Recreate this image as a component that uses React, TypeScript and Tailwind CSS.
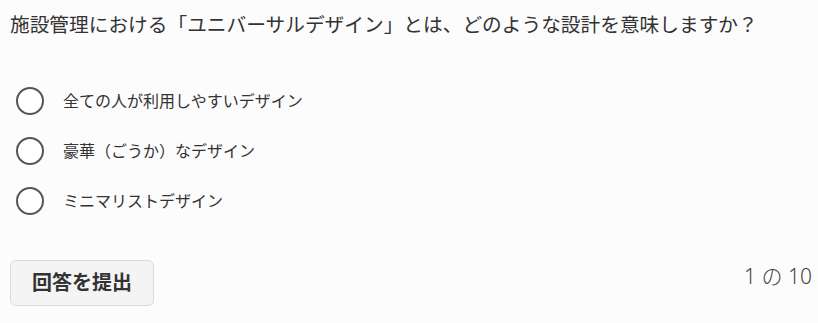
const options = [
  "全ての人が利用しやすいデザイン",
  "豪華（ごうか）なデザイン",
  "ミニマリストデザイン",
];

export default function App() {
  return (
    <div
      className="w-[818px] h-[323px] bg-[#fcfcfc] text-[#333] pl-[10px] pr-[6px] pt-[10px] overflow-hidden"
      style={{ fontFamily: '"Noto Sans", "Noto Sans CJK JP", sans-serif' }}
    >
      {/* QUESTION */}
      <h1 className="text-[19.7px] leading-[30px] font-normal text-[#333]">
        施設管理における「ユニバーサルデザイン」とは、どのような設計を意味しますか？
      </h1>

      {/* OPTIONS */}
      <div className="mt-[36px] flex flex-col">
        {options.map((option) => (
          <label key={option} className="h-[50px] flex items-center gap-[19px] pl-[6px] cursor-pointer">
            <span className="w-[28px] h-[28px] rounded-full border-2 border-[#555] bg-white shrink-0" />
            <span className="text-[16px] text-[#333]">{option}</span>
          </label>
        ))}
      </div>

      {/* FOOTER */}
      <div className="mt-[34px] flex items-start justify-between">
        <button className="h-[46px] px-[21px] rounded-[6px] bg-[#f4f4f4] border border-[#d9d9d9] text-[20px] font-bold text-[#333]">
          回答を提出
        </button>
        <span className="text-[21px] leading-[32px] font-light text-[#444]">1 の 10</span>
      </div>
    </div>
  );
}
